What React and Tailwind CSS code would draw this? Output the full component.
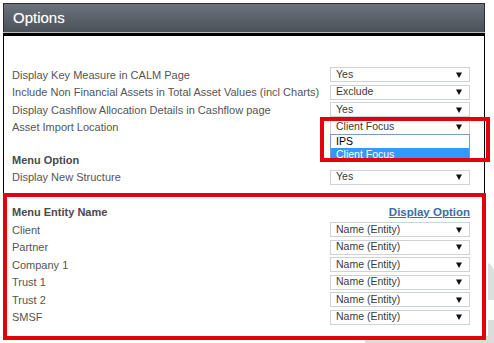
import React from "react";

const font = { fontFamily: '"Liberation Sans", Arial, sans-serif' };

function Select({ value }) {
  return (
    <div className="flex h-[15px] w-[140px] items-center justify-between border border-[#cfd2d6] bg-white pl-[5px] pr-[7px] text-[10.5px] text-[#3a3a3a]">
      <span>{value}</span>
      <svg width="6" height="6" viewBox="0 0 6 6">
        <polygon points="0,0.5 6,0.5 3,6" fill="#111" />
      </svg>
    </div>
  );
}

function Row({ label, children, bold }) {
  return (
    <div className="flex h-[17.5px] items-center justify-between">
      <span className={bold ? "font-bold text-[#4a4a4a]" : "text-[#555]"}>{label}</span>
      {children}
    </div>
  );
}

export default function App() {
  const entities = ["Client", "Partner", "Company 1", "Trust 1", "Trust 2", "SMSF"];

  return (
    <div className="relative h-[343px] w-[494px] overflow-hidden bg-white" style={font}>
      {/* faint watermark in the corner */}
      <svg className="absolute right-0 bottom-0" width="130" height="110" viewBox="0 0 130 110">
        <path d="M124 30 C132 34 134 50 134 67 L124 67 Z" fill="#dedede" />
        <rect x="124" y="87" width="6" height="23" fill="#dcdcdc" />
        <rect x="1" y="103" width="129" height="7" fill="#dcdcdc" />
      </svg>

      <div className="relative ml-[3px] w-[482px] pt-[3px] text-[11px]">
        {/* Header */}
        <div className="flex h-[29px] items-center border-t border-x border-[#2b2e33] bg-gradient-to-b from-[#6c737c] to-[#4b5159] pl-[9px] text-[15px] text-white [text-shadow:0_0_1px_rgba(255,255,255,0.4)]">
          Options
        </div>
        <div className="h-px bg-[#b9bdc2]" />
        <div className="h-[3px] bg-black" />

        {/* Body */}
        <div className="border-x border-black pt-[30px] pr-[14px] pb-[7px] pl-[8px]">
          <Row label="Display Key Measure in CALM Page">
            <Select value="Yes" />
          </Row>
          <Row label="Include Non Financial Assets in Total Asset Values (incl Charts)">
            <Select value="Exclude" />
          </Row>
          <Row label="Display Cashflow Allocation Details in Cashflow page">
            <Select value="Yes" />
          </Row>
          <Row label="Asset Import Location">
            <div className="relative">
              <Select value="Client Focus" />
              <div className="absolute top-[14px] left-0 z-10 w-[140px] border border-[#7a9cc6] bg-white text-[10.5px]">
                <div className="h-[13px] pl-[5px] leading-[13px] text-black">IPS</div>
                <div className="h-[13px] bg-[#3399ff] pl-[5px] leading-[13px] text-white">Client Focus</div>
              </div>
              <div className="absolute top-[-3px] left-[-10px] z-20 h-[45px] w-[170px] border-4 border-[#e3000f]" />
            </div>
          </Row>

          <div className="mt-[15px]">
            <Row label="Menu Option" bold />
            <Row label="Display New Structure">
              <Select value="Yes" />
            </Row>
          </div>
        </div>

        {/* Entity names */}
        <div className="w-[483px] border-4 border-[#e3000f] pt-[6.5px] pr-[12px] pb-[9.5px] pl-[5px]">
          <Row label="Menu Entity Name" bold>
            <a className="text-[11.5px] font-bold text-[#3a6ea8] underline">Display Option</a>
          </Row>
          {entities.map((e) => (
            <Row key={e} label={e}>
              <Select value="Name (Entity)" />
            </Row>
          ))}
        </div>
      </div>
    </div>
  );
}
